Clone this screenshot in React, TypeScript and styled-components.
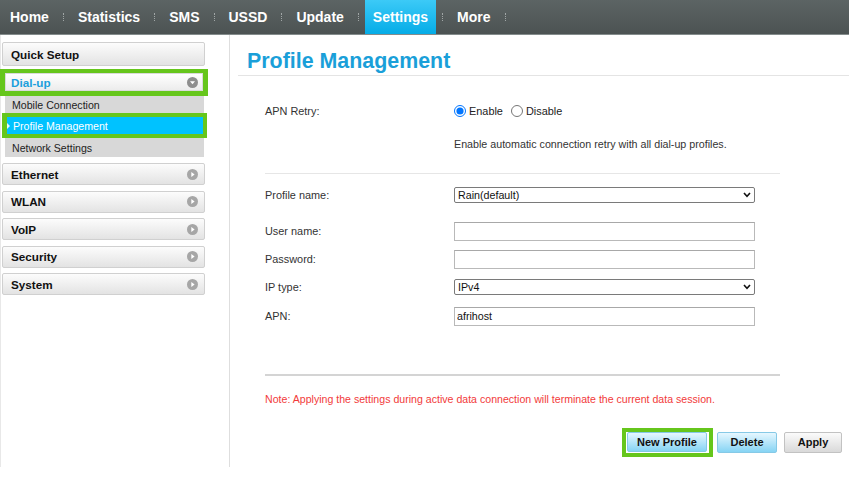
import styled, { createGlobalStyle } from "styled-components"

const GlobalStyle = createGlobalStyle`
  html, body {
    margin: 0;
    padding: 0;
    background: #fff;
  }
  body {
    font-family: "Liberation Sans", Arial, sans-serif;
    width: 849px;
    height: 477px;
    overflow: hidden;
  }
`

const green = "#66c61c"

const NavBar = styled.div`
  height: 34px;
  display: flex;
  align-items: stretch;
  padding-left: 2px;
  background: linear-gradient(to bottom, #5c6464, #4c5353);
  border-bottom: 1px solid #848c8c;
`

const NavItem = styled.div<{ $active?: boolean }>`
  display: flex;
  align-items: center;
  padding: 0 8px;
  font-size: 14px;
  font-weight: bold;
  color: #fff;
  background: ${(p) => (p.$active ? "linear-gradient(to bottom, #3ccaf7, #05ace7)" : "transparent")};
`

const NavSep = styled.span`
  align-self: center;
  width: 0;
  height: 8px;
  margin: 0 6px;
  border-left: 1px dotted #a0a6a6;
`

const Layout = styled.div`
  display: flex;
`

const Sidebar = styled.aside`
  box-sizing: border-box;
  width: 230px;
  height: 432px;
  padding-top: 7px;
  border-left: 1px solid #e8e8e8;
  border-right: 1px solid #dedede;
  display: flex;
  flex-direction: column;
`

const MenuHeader = styled.div<{ $h?: number; $mt?: number }>`
  box-sizing: border-box;
  height: ${(p) => p.$h ?? 22}px;
  width: 203px;
  margin: ${(p) => p.$mt ?? 0}px 0 0 1px;
  padding: 0 6px 0 8px;
  display: flex;
  align-items: center;
  justify-content: space-between;
  border: 1px solid #d0d0d0;
  border-radius: 2px;
  background: linear-gradient(to bottom, #fcfcfc, #e3e3e3);
  font-size: 11.7px;
  font-weight: bold;
  color: #111;
`

const Highlight = styled.div<{ $w: number; $ml: number; $bw: string; $mt?: number }>`
  box-sizing: border-box;
  width: ${(p) => p.$w}px;
  margin-left: ${(p) => p.$ml}px;
  margin-top: ${(p) => p.$mt ?? 0}px;
  border-style: solid;
  border-color: ${green};
  border-width: ${(p) => p.$bw};
`

const OpenHeader = styled.div`
  box-sizing: border-box;
  height: 18px;
  padding: 0 4px 0 5px;
  display: flex;
  align-items: center;
  justify-content: space-between;
  border: 1px solid #dadada;
  background: linear-gradient(to bottom, #ffffff, #ececec);
  font-size: 11.7px;
  font-weight: bold;
  color: #1c9fdc;
`

const SubMenu = styled.div`
  width: 199px;
  margin-left: 4px;
  background: #d8d8d8;
  display: flex;
  flex-direction: column;
`

const SubItem = styled.div<{ $h: number }>`
  height: ${(p) => p.$h}px;
  padding-left: 7px;
  display: flex;
  align-items: center;
  font-size: 10.6px;
  color: #222;
`

const SubSelected = styled.div`
  height: 17px;
  display: flex;
  align-items: center;
  background: #00c2ff;
  font-size: 10.6px;
  color: #fff;
  gap: 3px;
`

const Main = styled.main`
  flex: 1;
  padding: 13px 0 0 8px;
`

const Title = styled.h1`
  margin: 0;
  padding: 0 0 1px 9px;
  font-size: 21.4px;
  line-height: 26px;
  font-weight: bold;
  color: #1a9fd9;
  border-bottom: 1px solid #e4e4e4;
`

const Form = styled.div`
  width: 515px;
  margin-left: 27px;
  display: flex;
  flex-direction: column;
`

const Row = styled.div<{ $mt: number; $h?: number }>`
  display: grid;
  grid-template-columns: 189px 301px;
  align-items: center;
  height: ${(p) => p.$h ?? 20}px;
  margin-top: ${(p) => p.$mt}px;
  font-size: 10.7px;
  color: #333;
`

const Label = styled.span`
  font-size: 10.9px;
  color: #333;
`

const Divider = styled.div<{ $mt: number; $thick?: boolean }>`
  margin-top: ${(p) => p.$mt}px;
  border-top: ${(p) => (p.$thick ? "2px solid #d4d4d4" : "1px solid #e6e6e6")};
`

const RadioGroup = styled.div`
  display: flex;
  align-items: center;
  font-size: 10.9px;
  color: #222;
`

const Radio = styled.input`
  width: 12px;
  height: 12px;
  margin: 0 3px 0 0;
  & + span + & {
    margin-left: 8px;
  }
`

const TextInput = styled.input`
  box-sizing: border-box;
  width: 301px;
  height: 19px;
  padding: 0 2px;
  border: 1px solid #b9b9b9;
  border-top-color: #a8a8a8;
  font-family: "Liberation Sans", Arial, sans-serif;
  font-size: 10.7px;
  color: #111;
  outline: none;
`

const SelectWrap = styled.div`
  position: relative;
  width: 301px;
  height: 16px;
`

const Select = styled.select`
  box-sizing: border-box;
  width: 301px;
  height: 16px;
  padding: 0 0 0 3px;
  appearance: none;
  border: 1px solid #7a7a7a;
  border-radius: 2px;
  background: #fff;
  font-family: "Liberation Sans", Arial, sans-serif;
  font-size: 10.7px;
  color: #111;
`

const Chevron = styled.svg`
  position: absolute;
  right: 4px;
  top: 5px;
  pointer-events: none;
`

const Note = styled.div`
  margin-top: 14px;
  height: 18px;
  display: flex;
  align-items: center;
  font-size: 10.6px;
  color: #f23a3a;
`

const ButtonRow = styled.div`
  margin-top: 20px;
  padding-right: 7px;
  display: flex;
  justify-content: flex-end;
  align-items: center;
`

const ButtonFrame = styled.div`
  border: 4px solid ${green};
  padding: 0 2px 1px 1px;
  display: flex;
`

const Button = styled.button<{ $w: number; $h?: number; $gray?: boolean; $ml?: number }>`
  box-sizing: border-box;
  width: ${(p) => p.$w}px;
  height: ${(p) => p.$h ?? 21}px;
  margin-left: ${(p) => p.$ml ?? 0}px;
  margin-bottom: 1px;
  padding: 0;
  border: 1px solid ${(p) => (p.$gray ? "#c2c2c2" : "#86c9e6")};
  border-radius: 2px;
  background: ${(p) =>
    p.$gray
      ? "linear-gradient(to bottom, #fbfbfb, #d9d9d9)"
      : "linear-gradient(to bottom, #e6f7ff, #86d4f4)"};
  font-family: "Liberation Sans", Arial, sans-serif;
  font-size: 11px;
  font-weight: bold;
  color: #111;
`

const CircleIcon = ({ down, dark }: { down?: boolean; dark?: boolean }) => (
  <svg width="11" height="11" viewBox="0 0 11 11">
    <circle cx="5.5" cy="5.5" r="5.5" fill={dark ? "#8e8e8e" : "#a6a6a6"} />
    {down ? (
      <path d="M3 4.2 L8 4.2 L5.5 7.3 Z" fill="#fff" />
    ) : (
      <path d="M4.3 3 L7.6 5.5 L4.3 8 Z" fill="#fff" />
    )}
  </svg>
)

const navItems = ["Home", "Statistics", "SMS", "USSD", "Update", "Settings", "More"]

const DropSelect = ({ value }: { value: string }) => (
  <SelectWrap>
    <Select defaultValue={value}>
      <option>{value}</option>
    </Select>
    <Chevron width="8" height="6" viewBox="0 0 8 6">
      <path d="M1 1 L4 4.3 L7 1" stroke="#111" strokeWidth="1.6" fill="none" />
    </Chevron>
  </SelectWrap>
)

export default function App() {
  return (
    <>
      <GlobalStyle />
      <NavBar>
        {navItems.map((n) => (
          <>
            <NavItem key={n} $active={n === "Settings"}>
              {n}
            </NavItem>
            <NavSep key={n + "-sep"} />
          </>
        ))}
      </NavBar>
      <Layout>
        <Sidebar>
          <MenuHeader $h={24}>Quick Setup</MenuHeader>
          <Highlight $w={208} $ml={-1} $mt={3} $bw="4px 5px 5px 5px">
            <OpenHeader>
              Dial-up
              <CircleIcon down dark />
            </OpenHeader>
          </Highlight>
          <SubMenu>
            <SubItem $h={17}>Mobile Connection</SubItem>
            <Highlight $w={205} $ml={-3} $bw="4px 4px 4px 5px">
              <SubSelected>
                <svg width="3" height="6" viewBox="0 0 3 6">
                  <path d="M0 0 L3 3 L0 6 Z" fill="#e8f8ff" />
                </svg>
                Profile Management
              </SubSelected>
            </Highlight>
            <SubItem $h={19}>Network Settings</SubItem>
          </SubMenu>
          <MenuHeader $mt={6}>
            Ethernet
            <CircleIcon />
          </MenuHeader>
          {["WLAN", "VoIP", "Security", "System"].map((s) => (
            <MenuHeader key={s} $mt={5.5}>
              {s}
              <CircleIcon />
            </MenuHeader>
          ))}
        </Sidebar>
        <Main>
          <Title>Profile Management</Title>
          <Form>
            <Row $mt={25}>
              <Label>APN Retry:</Label>
              <RadioGroup>
                <Radio type="radio" name="retry" defaultChecked />
                <span>Enable</span>
                <Radio type="radio" name="retry" />
                <span>Disable</span>
              </RadioGroup>
            </Row>
            <Row $mt={13}>
              <span />
              <span>Enable automatic connection retry with all dial-up profiles.</span>
            </Row>
            <Divider $mt={19} />
            <Row $mt={11}>
              <Label>Profile name:</Label>
              <DropSelect value="Rain(default)" />
            </Row>
            <Row $mt={16}>
              <Label>User name:</Label>
              <TextInput type="text" />
            </Row>
            <Row $mt={8}>
              <Label>Password:</Label>
              <TextInput type="password" />
            </Row>
            <Row $mt={8}>
              <Label>IP type:</Label>
              <DropSelect value="IPv4" />
            </Row>
            <Row $mt={9}>
              <Label>APN:</Label>
              <TextInput type="text" defaultValue="afrihost" />
            </Row>
            <Divider $mt={48} $thick />
            <Note>
              Note: Applying the settings during active data connection will terminate the current data session.
            </Note>
          </Form>
          <ButtonRow>
            <ButtonFrame>
              <Button $w={80} $h={20} style={{ marginBottom: 0 }}>
                New Profile
              </Button>
            </ButtonFrame>
            <Button $w={60} $ml={4}>
              Delete
            </Button>
            <Button $w={58} $ml={7} $gray>
              Apply
            </Button>
          </ButtonRow>
        </Main>
      </Layout>
    </>
  )
}
